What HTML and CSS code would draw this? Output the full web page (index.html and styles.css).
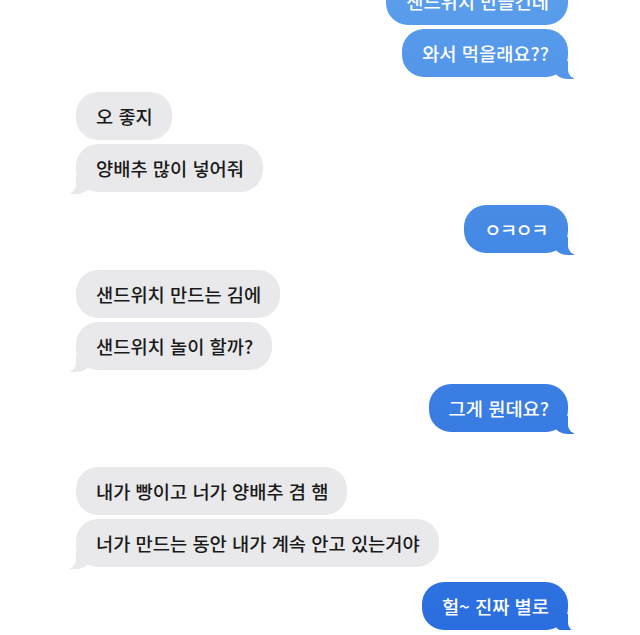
FILE: index.html
```html
<!DOCTYPE html>
<html lang="ko">
<head>
<meta charset="utf-8">
<title>Messages</title>
<link rel="stylesheet" href="styles.css">
</head>
<body>
<main class="chat">
  <section class="group sent">
    <p class="bubble">샌드위치 만들건데</p>
    <p class="bubble tail">와서 먹을래요??</p>
  </section>
  <section class="group recv">
    <p class="bubble">오 좋지</p>
    <p class="bubble tail">양배추 많이 넣어줘</p>
  </section>
  <section class="group sent gap-sm">
    <p class="bubble tail jamo">ㅇㅋㅇㅋ</p>
  </section>
  <section class="group recv gap-md">
    <p class="bubble">샌드위치 만드는 김에</p>
    <p class="bubble tail">샌드위치 놀이 할까?</p>
  </section>
  <section class="group sent gap-base">
    <p class="bubble tail">그게 뭔데요?</p>
  </section>
  <section class="group recv gap-lg">
    <p class="bubble">내가 빵이고 너가 양배추 겸 햄</p>
    <p class="bubble tail">너가 만드는 동안 내가 계속 안고 있는거야</p>
  </section>
  <section class="group sent">
    <p class="bubble tail">헐~ 진짜 별로</p>
  </section>
</main>
</body>
</html>
```
FILE: styles.css
```css
html, body {
  margin: 0;
  padding: 0;
  background: #ffffff;
}

body {
  font-family: "Noto Sans CJK KR", "Noto Sans", sans-serif;
  overflow: hidden;
}

.chat {
  display: flex;
  flex-direction: column;
  gap: 15px;
  margin-top: -23px;
  padding: 0 72px 0 76px;
}

.group {
  display: flex;
  flex-direction: column;
  gap: 4px;
}

.gap-sm { margin-top: -2px; }
.gap-md { margin-top: 2px; }
.gap-base { margin-top: -1px; }
.gap-lg { margin-top: 20px; }

.sent { align-items: flex-end; }
.recv { align-items: flex-start; }

.bubble {
  position: relative;
  margin: 0;
  padding: 12px 19px 12px 20px;
  font-size: 18.7px;
  font-weight: 500;
  line-height: 24px;
  border-radius: 22px;
  white-space: nowrap;
}

.bubble.jamo {
  letter-spacing: -1.5px;
  padding-right: 21px;
}

.recv .bubble {
  background: #e9e9eb;
  color: #1a1a1a;
}

.sent .bubble {
  color: #ffffff;
  background: linear-gradient(180deg, #5a9deb 0px, #4589e6 240px, #2a6ddf 635px) fixed;
}

.bubble.tail::before,
.bubble.tail::after {
  content: "";
  position: absolute;
  bottom: -2px;
  height: 18px;
}

.sent .bubble.tail::before {
  right: -6px;
  width: 22px;
  background: linear-gradient(180deg, #5a9deb 0px, #4589e6 240px, #2a6ddf 635px) fixed;
  border-bottom-left-radius: 16px 14px;
}

.sent .bubble.tail::after {
  right: -12px;
  width: 12px;
  background: #ffffff;
  border-bottom-left-radius: 9px;
}

.recv .bubble.tail::before {
  left: -6px;
  width: 22px;
  background: #e9e9eb;
  border-bottom-right-radius: 16px 14px;
}

.recv .bubble.tail::after {
  left: -12px;
  width: 12px;
  background: #ffffff;
  border-bottom-right-radius: 9px;
}
```
